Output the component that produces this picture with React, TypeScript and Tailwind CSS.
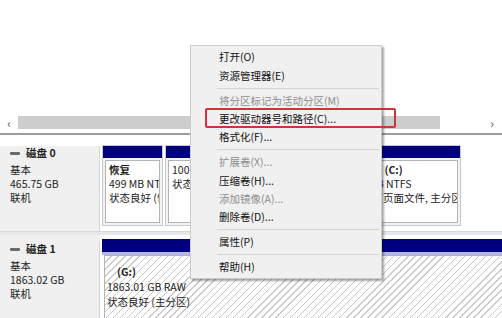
const FONT = "font-['Noto_Sans_CJK_SC','Noto_Sans',sans-serif]"

type MenuEntry = { label: string; disabled?: boolean } | 'sep'

const MENU: MenuEntry[] = [
  { label: '打开(O)' },
  { label: '资源管理器(E)' },
  'sep',
  { label: '将分区标记为活动分区(M)', disabled: true },
  { label: '更改驱动器号和路径(C)...' },
  { label: '格式化(F)...' },
  'sep',
  { label: '扩展卷(X)...', disabled: true },
  { label: '压缩卷(H)...' },
  { label: '添加镜像(A)...', disabled: true },
  { label: '删除卷(D)...' },
  'sep',
  { label: '属性(P)' },
  'sep',
  { label: '帮助(H)' },
]

function DiskLabel({ name, size }: { name: string; size: string }) {
  return (
    <div className="w-[100px] shrink-0 bg-[#f0f0f0] border-r border-[#d6d6d6] pl-[10px] leading-[14px] text-[#222]">
      <div className="flex items-center gap-[6px] mb-[3px]">
        <div className="w-[10px] h-[3px] bg-[#6a6a6a] rounded-[1px]" />
        <span className="font-bold">{name}</span>
      </div>
      <div>基本</div>
      <div>{size}</div>
      <div>联机</div>
    </div>
  )
}

function Partition({ width, lines }: { width: string; lines: string[] }) {
  return (
    <div className={`${width} shrink-0 flex flex-col border border-[#c8c8c8] bg-[#f3f3f3] overflow-hidden`}>
      <div className="h-[12px] bg-[#00007f]" />
      <div className="flex-1 m-[2px] border border-[#b4b4b4] bg-white px-[3px] pt-[2px] leading-[14px] whitespace-nowrap overflow-hidden text-[#222]">
        <div className="font-bold">{lines[0]}</div>
        <div>{lines[1]}</div>
        <div>{lines[2]}</div>
      </div>
    </div>
  )
}

export default function App() {
  return (
    <div className={`relative w-[502px] h-[318px] overflow-hidden bg-white text-[10.5px] ${FONT}`}>
      {/* blank area above the volume list */}
      <div className="h-[112px] bg-white" />

      {/* horizontal scrollbar */}
      <div className="h-[21px] flex items-center bg-white">
        <span className="w-[18px] text-center text-[#555] text-[12px] leading-none">‹</span>
        <div className="w-[422px] h-[13px] bg-[#cdcdcd]" />
        <div className="flex-1" />
        <span className="w-[20px] text-center text-[#555] text-[12px] leading-none">›</span>
      </div>
      <div className="h-[2px] bg-[#9c9c9c]" />

      {/* disk 0 */}
      <div className="h-[96px] flex">
        <div className="pt-[11px] flex">
          <DiskLabel name="磁盘 0" size="465.75 GB" />
        </div>
        <div className="flex-1 flex gap-[2px] pl-[2px] pt-[10px] pb-[5px] bg-white">
          <Partition width="w-[61px]" lines={['恢复', '499 MB NTFS', '状态良好 (恢复分区)']} />
          <Partition width="w-[161px]" lines={['', '100 MB', '状态良好 (EFI 系统分区)']} />
          <Partition width="w-[133px]" lines={['Windows (C:)', '465.17 GB NTFS', '状态良好 (页面文件, 主分区)']} />
        </div>
      </div>

      <div className="h-[4px] bg-[#e8e8e8] border-t border-[#d8d8d8]" />

      {/* disk 1 */}
      <div className="h-[83px] flex">
        <div className="pt-[7px] flex bg-[#f0f0f0]">
          <DiskLabel name="磁盘 1" size="1863.02 GB" />
        </div>
        <div className="flex-1 flex flex-col pl-[2px] pt-[4px]">
          <div className="h-[13px] bg-[#00007f]" />
          <div className="h-[3px] bg-[#b4b8e6]" />
          <div className="flex-1 ml-[2px] border-l border-t border-[#b4b4b4] bg-[repeating-linear-gradient(135deg,#ffffff_0px,#ffffff_4px,#cacaca_4px,#cacaca_5px)] pl-[2px] pt-[8px] leading-[15px] text-[#222]">
            <div className="font-bold pl-[10px]">(G:)</div>
            <div>1863.01 GB RAW</div>
            <div>状态良好 (主分区)</div>
          </div>
        </div>
      </div>

      {/* context menu */}
      <div className="absolute left-[190px] top-[45px] w-[192px] border border-[#cbcbcb] bg-[#f0f0f0] py-[2px] shadow-[2px_2px_2px_rgba(0,0,0,0.35)]">
        {MENU.map((m, i) =>
          m === 'sep' ? (
            <div key={i} className="h-px bg-[#d4d4d4] ml-[26px] mr-[2px] my-[2.75px]" />
          ) : (
            <div
              key={i}
              className={`h-[18.4px] flex items-center pl-[28px] whitespace-nowrap ${m.disabled ? 'text-[#8e8e8e]' : 'text-[#111]'}`}
            >
              {m.label}
            </div>
          )
        )}
      </div>

      {/* red highlight around 更改驱动器号和路径 */}
      <div className="absolute left-[205px] top-[108px] w-[191px] h-[20px] border-2 border-[#d2323c] rounded-[2px]" />
    </div>
  )
}
